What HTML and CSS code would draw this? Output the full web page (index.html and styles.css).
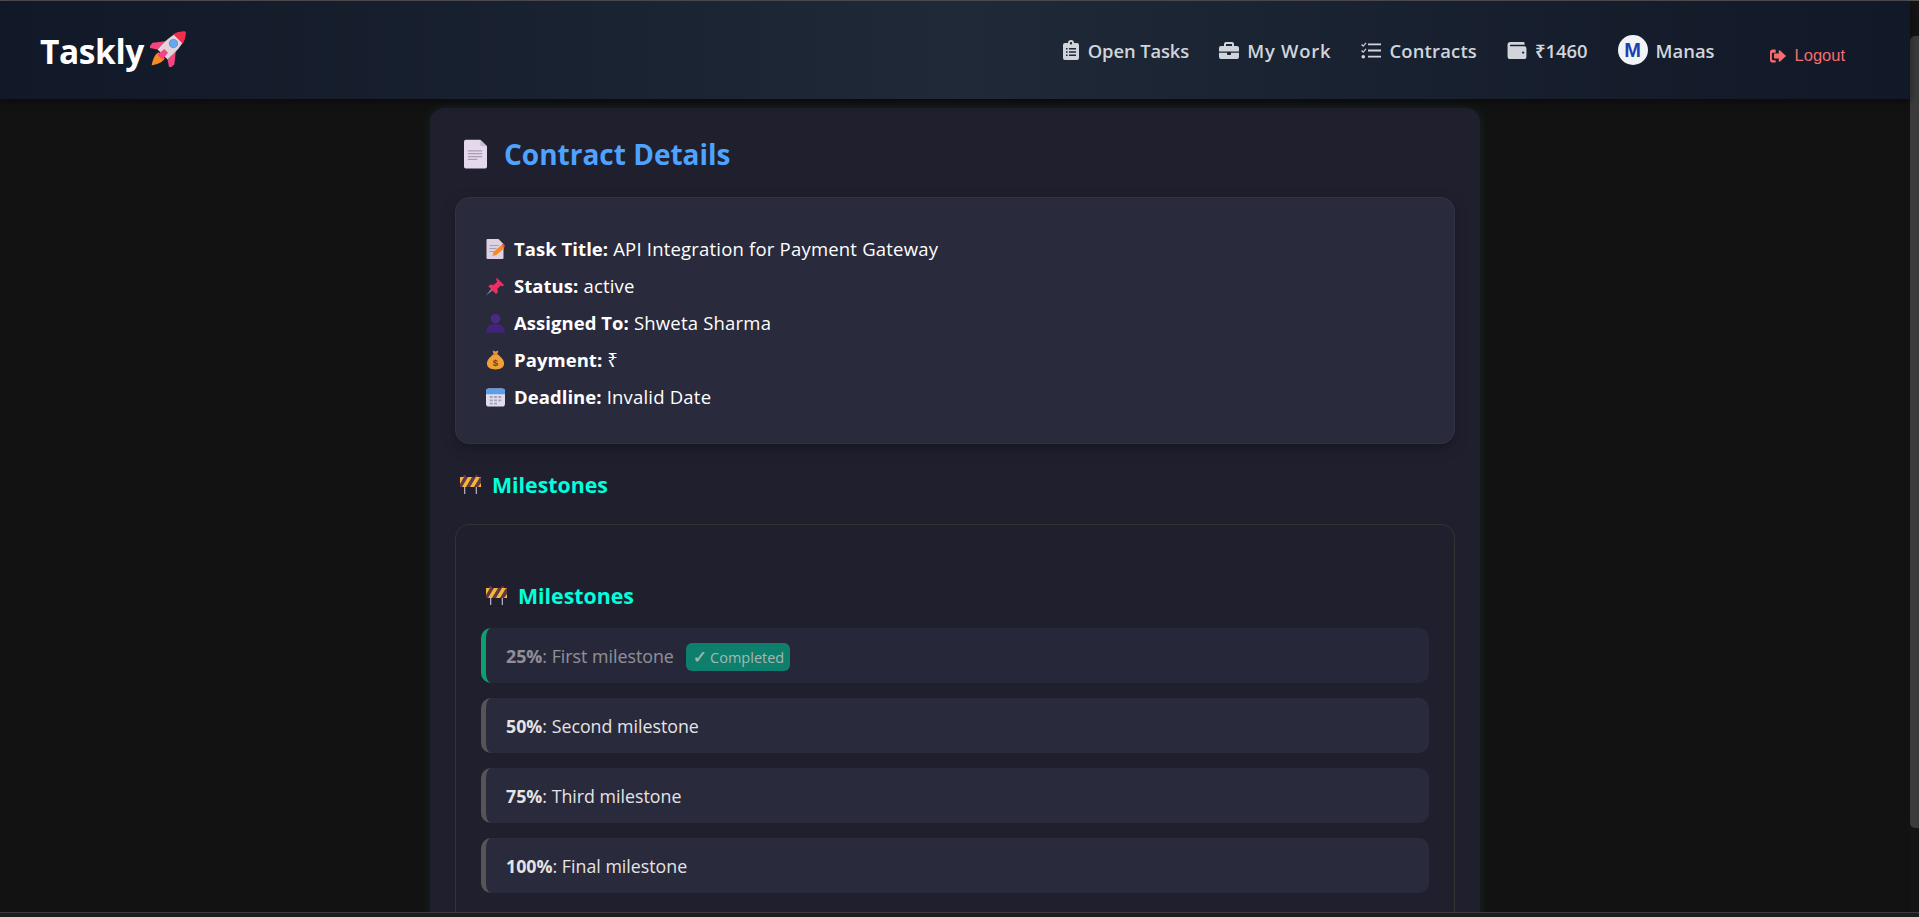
FILE: index.html
```html
<!DOCTYPE html>
<html lang="en">
<head>
<meta charset="utf-8">
<title>Taskly</title>
<link rel="stylesheet" href="styles.css">
</head>
<body>
<div class="window">
  <div class="page">
    <header class="navbar">
      <div class="logo"><span>Taskly</span>
        <svg class="rocket" viewBox="4 4 28 28"><g transform="rotate(45 18 18)"><path d="M14.500 25h7c1 4-1.500 8-3.500 11-2-3-4.500-7-3.500-11z" fill="#f58a26"/><path d="M12.500 15L6 23l.5 5 6-4z" fill="#f7437f"/><path d="M23.500 15l6.500 8-.5 5-6-4z" fill="#f7437f"/><path d="M18-1c5 4 6.500 12 5.500 25h-11c-1-13 .5-21 5.500-25z" fill="#e2d4dd"/><path d="M18-1c2.800 2.200 4.400 5 5.200 8H12.800c.8-3 2.400-5.800 5.200-8z" fill="#f02d4c"/><path d="M16 20h4l.8 7h-5.600z" fill="#f7437f"/><circle cx="18" cy="12" r="3.600" fill="#8c8ca3"/><circle cx="18" cy="12" r="2.700" fill="#63a8f5"/></g></svg>
      </div>
      <nav class="nav">
        <a class="nav-link nav-tight"><svg class="ni ni-clip" viewBox="0 0 16 20"><path fill-rule="evenodd" d="M2 3h3a3 3 0 0 1 6 0h3a2 2 0 0 1 2 2v13a2 2 0 0 1-2 2H2a2 2 0 0 1-2-2V5a2 2 0 0 1 2-2zM8 2a1.200 1.200 0 1 0 0 2.400A1.200 1.200 0 0 0 8 2zM3 8v1.600h1.600V8zM6 8v1.600h7V8zM3 11.200v1.600h1.600v-1.600zM6 11.200v1.600h7v-1.600zM3 14.400V16h1.600v-1.600zM6 14.400V16h7v-1.600z"/></svg>Open Tasks</a>
        <a class="nav-link nav-loose"><svg class="ni ni-wide" viewBox="0 0 20 17"><path fill-rule="evenodd" d="M7 0h6a2 2 0 0 1 2 2v2h3a2 2 0 0 1 2 2v3.600H0V6a2 2 0 0 1 2-2h3V2a2 2 0 0 1 2-2zM7 2v2h6V2z"/><path d="M0 10.800h8v1.400a.8.8 0 0 0 .8.8h2.400a.8.8 0 0 0 .8-.8v-1.400h8V15a2 2 0 0 1-2 2H2a2 2 0 0 1-2-2z"/></svg>My Work</a>
        <a class="nav-link nav-contracts"><svg class="ni ni-wide" viewBox="0 0 20 17"><path d="M7 1.500h13v1.800H7zM7 7.600h13v1.800H7zM7 13.800h13v1.800H7z"/><path d="M1 2l1.200 1.200L4.600.4l.9.8-3.300 3.700L.2 2.900zM1 8l1.200 1.200 2.400-2.800.9.8-3.300 3.700L.2 8.900z"/><circle cx="2.300" cy="14.700" r="1.800"/></svg>Contracts</a>
        <a class="nav-link"><svg class="ni ni-wide" viewBox="0 0 20 18"><path fill-rule="evenodd" d="M3 0h14a1 1 0 0 1 1 1v2H3a1 1 0 0 0 0 1.600h15a2 2 0 0 1 2 2V16a2 2 0 0 1-2 2H3a3 3 0 0 1-3-3V3a3 3 0 0 1 3-3zM16.500 10a1.200 1.200 0 1 0 0 2.400 1.200 1.200 0 0 0 0-2.400z"/></svg>₹1460</a>
        <a class="nav-link user"><span class="avatar">M</span>Manas</a>
        <button class="logout"><svg class="logout-icon" viewBox="0 0 17 14"><path d="M5.500 0H3a3 3 0 0 0-3 3v8a3 3 0 0 0 3 3h2.500a.6.6 0 0 0 .6-.6v-1.300a.6.6 0 0 0-.6-.6H3a1 1 0 0 1-1-1V4.500a1 1 0 0 1 1-1h2.500a.6.6 0 0 0 .6-.6V.6a.6.6 0 0 0-.6-.6z"/><path d="M10.500 1l6 5.400a.8.8 0 0 1 0 1.200l-6 5.400a.7.7 0 0 1-1.200-.5V9.700H5a.8.8 0 0 1-.8-.8V5.100a.8.8 0 0 1 .8-.8h4.300V1.500a.7.7 0 0 1 1.200-.5z"/></svg>Logout</button>
      </nav>
    </header>
    <main class="content">
      <section class="card">
        <h1 class="title"><svg class="doc" viewBox="0 0 24 30"><path d="M2 0h15l7 7v21a2 2 0 0 1-2 2H2a2 2 0 0 1-2-2V2a2 2 0 0 1 2-2z" fill="#e4d9ec"/><path d="M17 0l7 7h-6a1 1 0 0 1-1-1z" fill="#c8bcd2"/><path d="M4 11h15v1.300H4zM4 14h15v1.300H4zM4 17h15v1.300H4zM4 20h10v1.300H4z" fill="#a99cb5"/></svg>Contract Details</h1>
        <div class="info">
          <p class="row"><svg class="emoji" viewBox="0 0 18 20"><path d="M1 0h11l5 5v14a1 1 0 0 1-1 1H1a1 1 0 0 1-1-1V1a1 1 0 0 1 1-1z" fill="#dcd2e2"/><path d="M3 6h9v1H3zM3 9h7v1H3zM3 12h5v1H3z" fill="#a99cb5"/><path d="M6 17l1-4 8-7 3 3-8 7z" fill="#f58a26"/><path d="M15 6l1.500-1.500 2 2L17.500 9z" fill="#f0485c"/></svg><b>Task Title:</b> API Integration for Payment Gateway</p>
          <p class="row"><svg class="emoji" viewBox="0 0 20 20"><path d="M0 20l7-9 2 2z" fill="#8a8a96"/><path d="M11 1l8 8-2 1.500-1.500-1-3.500 3.500.5 3.500-2 2-8-8 2-2 3.500.5L12 5.500l-1-1.500z" fill="#ee2f63"/></svg><b>Status:</b> active</p>
          <p class="row"><svg class="emoji" viewBox="0 0 20 20"><circle cx="10" cy="5.500" r="5" fill="#4b2a86"/><path d="M0 20c0-6 4-9 10-9s10 3 10 9z" fill="#43247c"/></svg><b>Assigned To:</b> Shweta Sharma</p>
          <p class="row"><svg class="emoji" viewBox="0 0 20 20"><path d="M7 0l3 1 3-1-1 4H8z" fill="#e8962b"/><path d="M8 4h4c4 3 7 6 7 10 0 4-4 6-9 6s-9-2-9-6c0-4 3-7 7-10z" fill="#f0a035"/><text class="dollar" x="10" y="16" text-anchor="middle">$</text></svg><b>Payment:</b> ₹</p>
          <p class="row"><svg class="emoji" viewBox="0 0 20 20"><rect y="1" width="20" height="19" rx="3" fill="#e2dcec"/><path d="M3 1h14a3 3 0 0 1 3 3v3H0V4a3 3 0 0 1 3-3z" fill="#5c9ee8"/><path d="M4 9h3v2H4zM8.500 9h3v2h-3zM13 9h3v2h-3zM4 12.500h3v2H4zM8.500 12.500h3v2h-3zM13 12.500h3v2h-3zM4 16h3v2H4zM8.500 16h3v2h-3z" fill="#9ea3b5"/></svg><b>Deadline:</b> Invalid Date</p>
        </div>
        <h2 class="section-title"><svg class="barrier" viewBox="0 0 21 19"><path d="M4 11h1.300v8H4zM15.700 11H17v8h-1.300z" fill="#b3a9bd"/><circle cx="4.500" cy="1.500" r="1.500" fill="#8a2a55"/><circle cx="16.500" cy="1.500" r="1.500" fill="#8a2a55"/><path d="M0 2h21v10H0z" fill="#f7b733"/><path d="M4 2h4l-6 10H0v-3zM12 2h4l-6 10H6zM21 3v5l-3 4h-4l6-10z" fill="#5b3a4e"/></svg>Milestones</h2>
        <div class="box">
          <h3 class="section-title inner"><svg class="barrier" viewBox="0 0 21 19"><path d="M4 11h1.300v8H4zM15.700 11H17v8h-1.300z" fill="#b3a9bd"/><circle cx="4.500" cy="1.500" r="1.500" fill="#8a2a55"/><circle cx="16.500" cy="1.500" r="1.500" fill="#8a2a55"/><path d="M0 2h21v10H0z" fill="#f7b733"/><path d="M4 2h4l-6 10H0v-3zM12 2h4l-6 10H6zM21 3v5l-3 4h-4l6-10z" fill="#5b3a4e"/></svg>Milestones</h3>
          <div class="milestone done"><span class="m-text"><b>25%</b>: First milestone</span><span class="badge"><span class="check">✓</span>Completed</span></div>
          <div class="milestone"><span class="m-text"><b>50%</b>: Second milestone</span></div>
          <div class="milestone"><span class="m-text"><b>75%</b>: Third milestone</span></div>
          <div class="milestone"><span class="m-text"><b>100%</b>: Final milestone</span></div>
        </div>
      </section>
    </main>
  </div>
  <div class="scrollbar"><div class="thumb"></div></div>
</div>
<div class="bottom-bar"></div>
</body>
</html>
```
FILE: styles.css
```css
* { box-sizing: border-box; }
html, body { margin: 0; height: 917px; overflow: hidden; }
body {
  background: #121212;
  color: #fff;
  font-family: "Open Sans", "Noto Sans", sans-serif;
  display: flex;
  flex-direction: column;
}
.window {
  height: 912px;
  border-top: 1px solid #555;
  display: flex;
  flex: none;
}
.page { flex: 1; min-width: 0; display: flex; flex-direction: column; }
.navbar {
  height: 98px;
  flex: none;
  padding: 0 65px 0 40px;
  display: flex;
  align-items: center;
  justify-content: space-between;
  background: linear-gradient(90deg, #111827 0%, #1f2937 50%, #111827 100%);
  box-shadow: 0 2px 8px rgba(0, 0, 0, .5);
  position: relative;
}
.logo { display: flex; align-items: center; gap: 6px; font-size: 33.500px; font-weight: 700; letter-spacing: -.4px; margin-top: 1px; }
.rocket { width: 36px; height: 36px; margin-top: -4px; }
.nav { display: flex; align-items: center; }
.nav-link { display: flex; align-items: center; color: #d1d5db; font-size: 18.400px; font-weight: 600; margin-right: 30px; }
.nav-tight { letter-spacing: -.1px; }
.nav-loose { letter-spacing: .8px; }
.nav-contracts { letter-spacing: .2px; }
.ni { fill: #d1d5db; margin-right: 8px; }
.ni-clip { width: 16px; height: 20px; margin-right: 9px; }
.ni-wide { width: 20px; height: 17px; }
.avatar {
  width: 30px; height: 30px; border-radius: 50%;
  background: #f1f3f9; color: #1e40af;
  font: 700 20px/30px "Liberation Sans", sans-serif;
  text-align: center; margin-right: 8px; letter-spacing: 0;
}
.user { margin-right: 55px; }
.logout {
  display: flex; align-items: center;
  background: none; border: 0; padding: 0; margin-top: 11px;
  color: #f76d6d;
  font: 16.500px "Liberation Sans", sans-serif;
}
.logout-icon { width: 16px; height: 14px; fill: #f76d6d; margin-right: 9px; }
.content { flex: 1; min-height: 0; overflow: hidden; }
.card {
  width: 1050px;
  margin: 9px auto 0;
  padding: 25px;
  height: 900px;
  background: #1f1f2e;
  border-radius: 14px;
  box-shadow: 0 0 12px rgba(0, 255, 170, .09);
}
.title {
  margin: 0 0 24px;
  height: 41px;
  display: flex; align-items: center;
  color: #4da3ff;
  font-size: 28px; font-weight: 700;
}
.doc { width: 23px; height: 30px; margin: 0 17px 0 9px; }
.info {
  height: 247px;
  margin-top: -1px;
  padding: 32px 25px 0 30px;
  background: #2a2a3d;
  border: 1px solid #33333f;
  border-radius: 14px;
  box-shadow: 0 4px 14px rgba(0, 0, 0, .25);
}
.row { margin: 0; height: 37px; display: flex; align-items: center; font-size: 18.500px; letter-spacing: .2px; white-space: pre; }
.row b { font-weight: 700; letter-spacing: .05px; }
.emoji { width: 19px; height: 20px; margin-right: 9px; flex: none; }
.dollar { font: 700 10px "Liberation Sans", sans-serif; fill: #7a3f10; }
.section-title {
  margin: 25px 0 25px;
  height: 30px;
  display: flex; align-items: center;
  color: #00ffdc;
  font-size: 21.300px; font-weight: 700;
}
.barrier { width: 21px; height: 19px; margin: 0 11px 0 5px; }
.box {
  border: 1px solid #333;
  border-radius: 14px;
  padding: 55px 25px 25px;
}
.inner { margin: 0 0 18px; }
.inner .barrier { margin-left: 5px; }
.milestone {
  height: 55px;
  margin-bottom: 15px;
  display: flex; align-items: center;
  padding-left: 20px;
  background: #2a2a3d;
  border-left: 5px solid #555;
  border-radius: 10px;
  font-size: 17.800px;
  color: #e4e4e4;
}
.milestone.done { border-left-color: #0d9f6e; background: #27273a; }
.done .m-text { opacity: .55; }
.badge {
  margin-left: 12px;
  margin-top: 2px;
  height: 28px;
  width: 104px;
  padding: 1px 0 0 7px;
  display: flex; align-items: center;
  background: #0d7f6c;
  color: #a5b8b4;
  border-radius: 6px;
  font-size: 14.500px;
}
.check { font: 700 17px "DejaVu Sans", sans-serif; -webkit-text-stroke: .4px #a5b8b4; margin-right: 3px; }
.scrollbar { width: 9px; flex: none; padding-top: 35px; background: #141414; }
.thumb { height: 792px; background: #3b3b3b; border-radius: 5px 0 0 5px; }
.bottom-bar { flex: 1; background: #1d1d1d; border-top: 1px solid #3c3c3c; }
```
